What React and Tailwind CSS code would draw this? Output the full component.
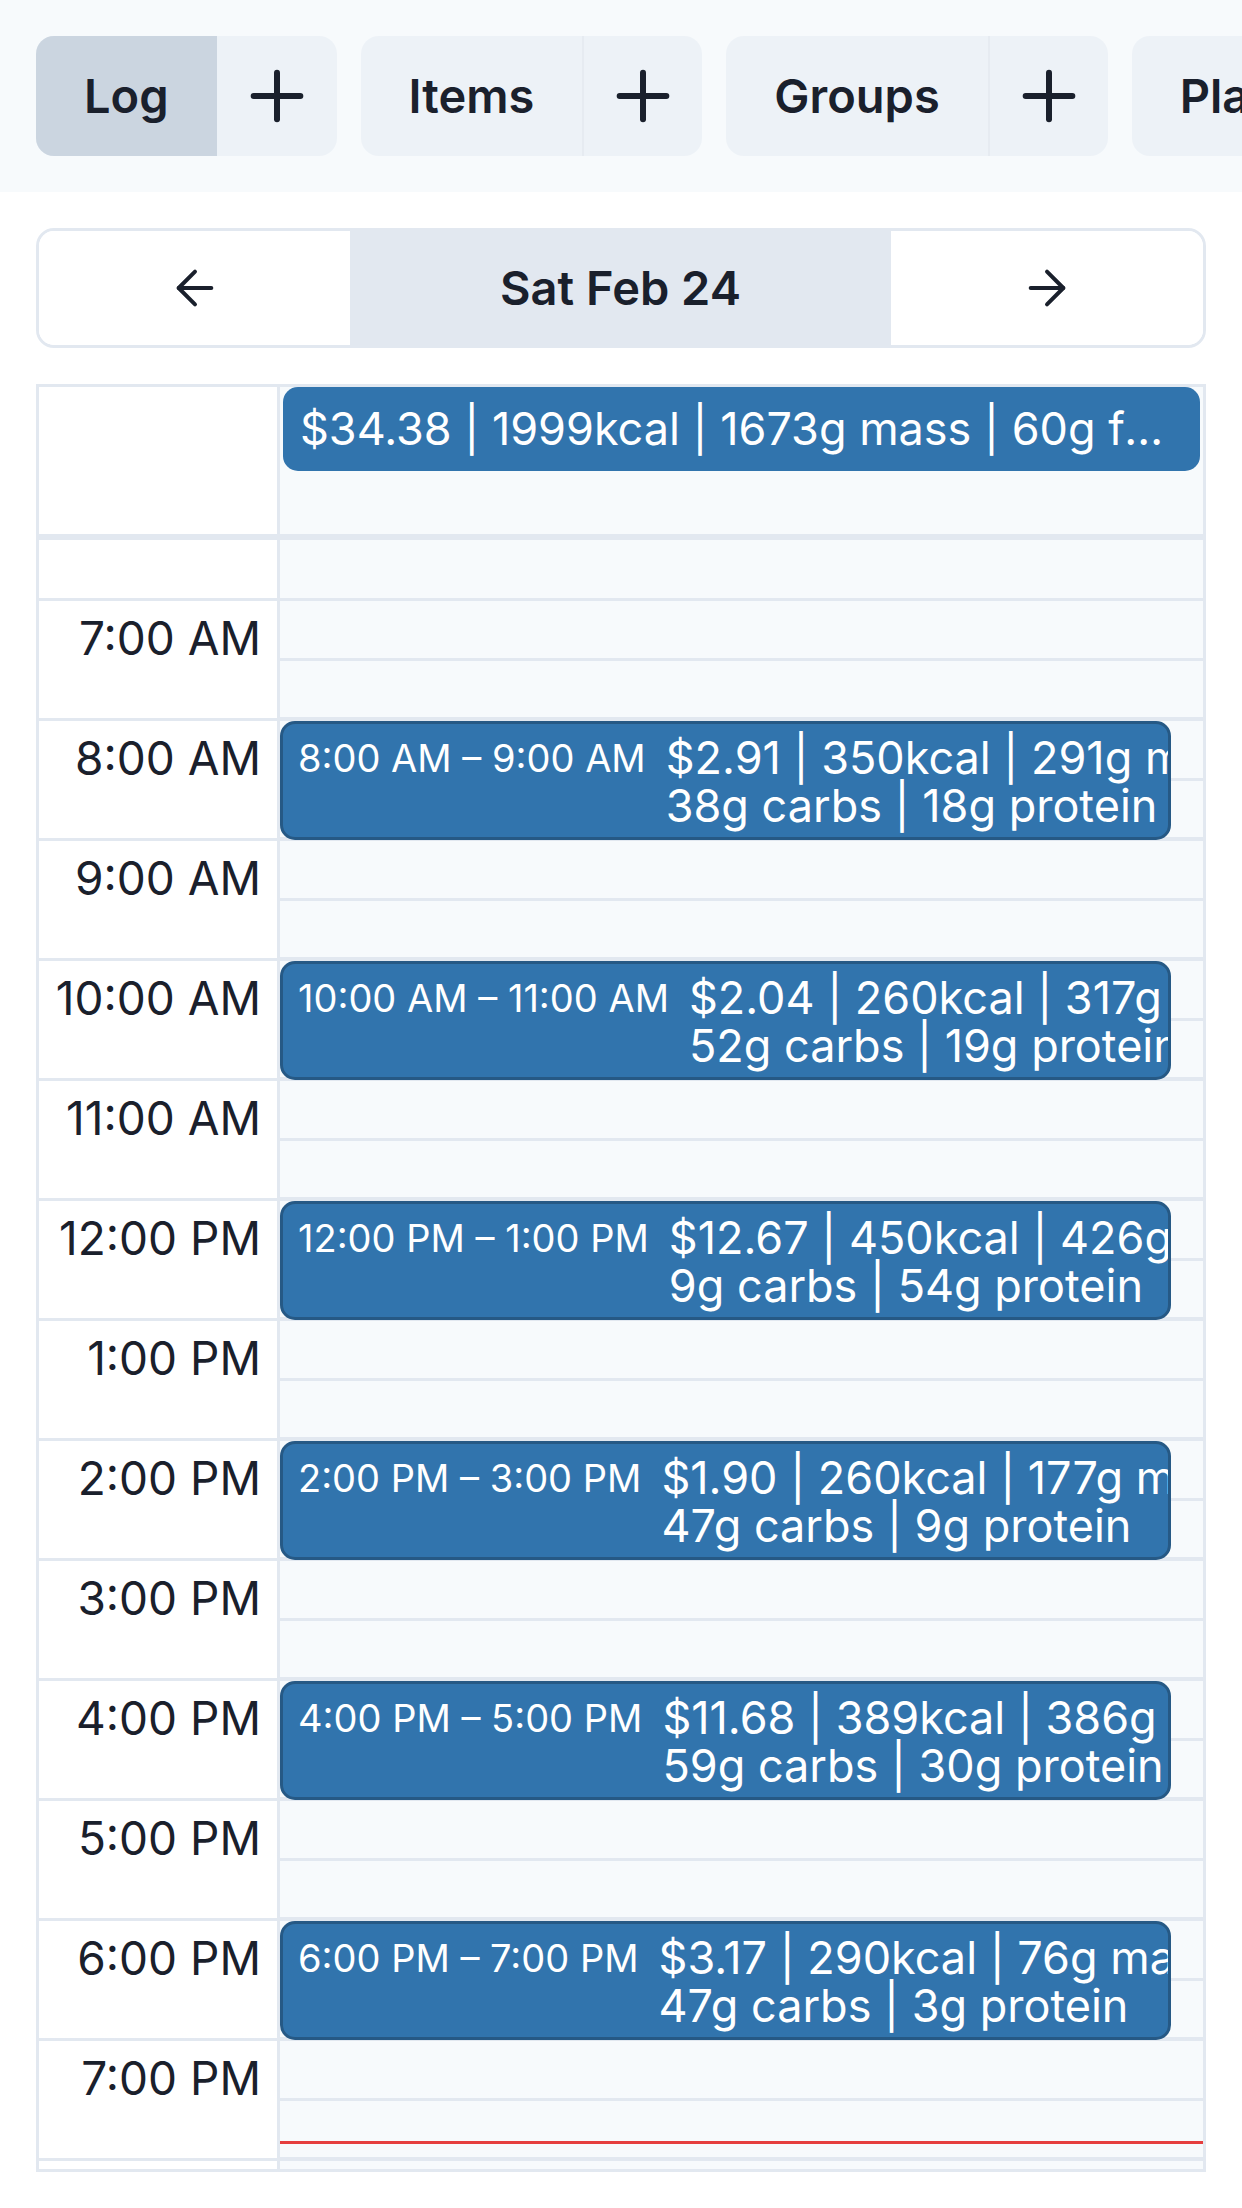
import { Plus, ArrowLeft, ArrowRight } from "lucide-react";

const tabs = [
  { name: "Log", active: true },
  { name: "Items" },
  { name: "Groups" },
  { name: "Plans" },
];

const hours = [
  "7:00 AM", "8:00 AM", "9:00 AM", "10:00 AM", "11:00 AM", "12:00 PM",
  "1:00 PM", "2:00 PM", "3:00 PM", "4:00 PM", "5:00 PM", "6:00 PM", "7:00 PM", "8:00 PM",
];

// keyed by hour index in the list above
const events = {
  1: { label: "8:00 AM – 9:00 AM", line1: "$2.91 | 350kcal | 291g mass | 12g fat |", line2: "38g carbs | 18g protein" },
  3: { label: "10:00 AM – 11:00 AM", line1: "$2.04 | 260kcal | 317g mass | 7g fat |", line2: "52g carbs | 19g protein" },
  5: { label: "12:00 PM – 1:00 PM", line1: "$12.67 | 450kcal | 426g mass | 25g fat |", line2: "9g carbs | 54g protein" },
  7: { label: "2:00 PM – 3:00 PM", line1: "$1.90 | 260kcal | 177g mass | 3g fat |", line2: "47g carbs | 9g protein" },
  9: { label: "4:00 PM – 5:00 PM", line1: "$11.68 | 389kcal | 386g mass | 12g fat |", line2: "59g carbs | 30g protein" },
  11: { label: "6:00 PM – 7:00 PM", line1: "$3.17 | 290kcal | 76g mass | 1g fat |", line2: "47g carbs | 3g protein" },
};

export default function App() {
  return (
    <div className="min-h-[2208px] bg-white text-[#1a202c] font-['Inter','Noto_Sans',sans-serif]">
      {/* ── tabs ── */}
      <div className="bg-[#f7fafc] h-[192px] px-[36px] py-[36px] flex gap-[24px] overflow-hidden">
        {tabs.map((t) => (
          <div key={t.name} className="flex shrink-0 h-[120px] rounded-[18px] overflow-hidden bg-[#edf2f7]">
            <div className={`px-[48px] flex items-center text-[47px] font-semibold ${t.active ? "bg-[#cbd5e0]" : ""}`}>
              {t.name}
            </div>
            <div className={`w-[120px] flex items-center justify-center ${t.active ? "" : "border-l-2 border-[#e6ebf1]"}`}>
              <Plus size={80} strokeWidth={1.8} />
            </div>
          </div>
        ))}
      </div>

      {/* ── date nav ── */}
      <div className="mx-[36px] mt-[36px] h-[120px] flex rounded-[18px] border-[3px] border-[#e2e8f0] overflow-hidden">
        <div className="w-[311px] bg-white flex items-center justify-center">
          <ArrowLeft size={56} strokeWidth={1.7} />
        </div>
        <div className="flex-1 bg-[#e2e8f0] flex items-center justify-center text-[47px] font-semibold">
          Sat Feb 24
        </div>
        <div className="w-[312px] bg-white flex items-center justify-center">
          <ArrowRight size={56} strokeWidth={1.7} />
        </div>
      </div>

      {/* ── calendar ── */}
      <div className="mx-[36px] mt-[36px] h-[1788px] border-[3px] border-[#e2e8f0] overflow-hidden">
        <div className="flex h-[153px] border-b-[6px] border-[#e2e8f0]">
          <div className="w-[241px] shrink-0 border-r-[3px] border-[#e2e8f0] bg-white" />
          <div className="flex-1 min-w-0 bg-[#f7fafc] px-[3px]">
            <div className="h-[84px] rounded-[15px] bg-[#3174ad] text-white text-[45px] px-[17px] flex items-center">
              <span className="truncate">$34.38 | 1999kcal | 1673g mass | 60g fat | 252g carbs | 133g protein</span>
            </div>
          </div>
        </div>

        <div className="flex">
          <div className="w-[241px] shrink-0 border-r-[3px] border-[#e2e8f0] bg-white">
            <div className="h-[61px] border-b-[3px] border-[#e2e8f0]" />
            {hours.map((h) => (
              <div key={h} className="h-[120px] border-b-[3px] border-[#e2e8f0] text-right pr-[16px] pt-[10px] text-[46px] leading-[54px]">
                {h}
              </div>
            ))}
          </div>

          <div className="flex-1 min-w-0 bg-[#f7fafc]">
            <div className="h-[61px] border-b-[3px] border-[#e2e8f0]" />
            {hours.map((h, i) => {
              const ev = events[i];
              return (
                <div key={h} className="relative">
                  <div className="h-[60px] border-b-[3px] border-[#e2e8f0]" />
                  <div className="h-[60px] border-b-[4px] border-[#e2e8f0]" />
                  {ev && (
                    <div className="absolute top-0 left-0 right-[32px] h-[119px] rounded-[15px] bg-[#3174ad] border-[3px] border-[#265985] text-white px-[15px] pt-[10px] flex items-start gap-[20px] overflow-hidden">
                      <div className="shrink-0 text-[38px] leading-[48px] whitespace-nowrap">{ev.label}</div>
                      <div className="min-w-0 text-[45px] leading-[48px] whitespace-nowrap">
                        <div>{ev.line1}</div>
                        <div>{ev.line2}</div>
                      </div>
                    </div>
                  )}
                  {i === 12 && <div className="absolute left-0 right-0 top-[100px] h-[3px] bg-[#e53e3e]" />}
                </div>
              );
            })}
          </div>
        </div>
      </div>
    </div>
  );
}
